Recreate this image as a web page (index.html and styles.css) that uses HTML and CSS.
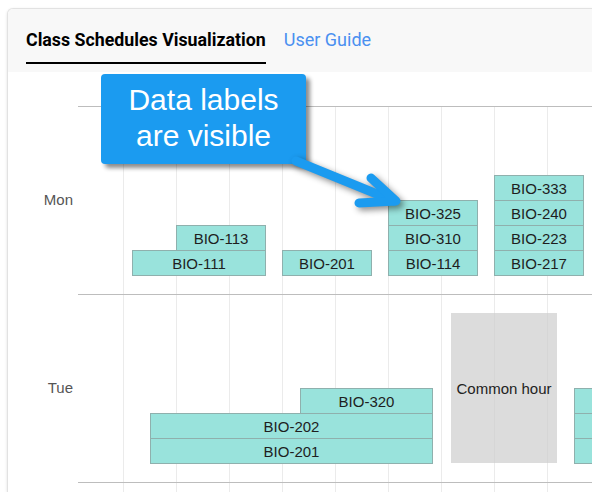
FILE: index.html
```html
<!DOCTYPE html>
<html lang="en">
<head>
<meta charset="utf-8">
<title>Class Schedules Visualization</title>
<link rel="stylesheet" href="styles.css">
</head>
<body>
<div class="card">
  <div class="tabs">
    <div class="tab active">Class Schedules Visualization</div>
    <div class="tab link">User Guide</div>
  </div>
  <div class="chart">
    <div class="row">
      <div class="day">Mon</div>
      <div class="track">
        <div class="bar" style="left:54px;top:143px;width:134px">BIO-111</div>
        <div class="bar" style="left:98px;top:118px;width:90px">BIO-113</div>
        <div class="bar" style="left:204px;top:143px;width:90px">BIO-201</div>
        <div class="bar" style="left:310px;top:143px;width:90px">BIO-114</div>
        <div class="bar" style="left:310px;top:118px;width:90px">BIO-310</div>
        <div class="bar" style="left:310px;top:93px;width:90px">BIO-325</div>
        <div class="bar" style="left:416px;top:143px;width:90px">BIO-217</div>
        <div class="bar" style="left:416px;top:118px;width:90px">BIO-223</div>
        <div class="bar" style="left:416px;top:93px;width:90px">BIO-240</div>
        <div class="bar" style="left:416px;top:68px;width:90px">BIO-333</div>
      </div>
    </div>
    <div class="row">
      <div class="day">Tue</div>
      <div class="track">
        <div class="bar" style="left:72px;top:143px;width:283px">BIO-201</div>
        <div class="bar" style="left:72px;top:118px;width:283px">BIO-202</div>
        <div class="bar" style="left:222px;top:93px;width:133px">BIO-320</div>
        <div class="block" style="left:373px;top:18px;width:106px;height:150px">Common hour</div>
        <div class="bar" style="left:496px;top:143px;width:133px"></div>
        <div class="bar" style="left:496px;top:118px;width:133px"></div>
        <div class="bar" style="left:496px;top:93px;width:133px"></div>
      </div>
    </div>
    <div class="row last">
      <div class="day"></div>
      <div class="track"></div>
    </div>
  </div>
  <div class="callout">Data labels<br>are visible</div>
  <svg class="pointer" width="592" height="492" viewBox="0 0 592 492" aria-hidden="true">
    <g fill="none" stroke="#1b9bf0" stroke-width="9" stroke-linecap="round" stroke-linejoin="round">
      <path d="M296 161 L394 201"/>
      <path d="M371 178 L396 201 L359 203"/>
    </g>
  </svg>
</div>
</body>
</html>
```

FILE: styles.css
```css
html, body {
  margin: 0;
  padding: 0;
  background: #ffffff;
  overflow: hidden;
}

body {
  width: 592px;
  height: 492px;
}

.card {
  position: relative;
  margin: 8px 0 0 7px;
  width: 585px;
  height: 483px;
  overflow: hidden;
  border: 1px solid #e2e2e2;
  border-right: 0;
  border-bottom: 0;
  border-radius: 6px 0 0 0;
  box-shadow: 0 1px 3px rgba(0, 0, 0, 0.12);
  background: #ffffff;
}

.tabs {
  display: flex;
  align-items: flex-end;
  gap: 18px;
  padding: 20px 0 8px 18px;
  background: #f8f8f8;
  font-family: Roboto, "Liberation Sans", sans-serif;
  font-size: 18px;
  line-height: 22px;
}

.tab {
  padding-bottom: 11px;
  border-bottom: 2px solid transparent;
  white-space: nowrap;
}

.tab.active {
  font-weight: 700;
  font-size: 17.8px;
  color: #000000;
  border-bottom-color: #000000;
}

.tab.link {
  color: #4a90f0;
}

.chart {
  margin-top: 34px;
  font-family: "Liberation Sans", Arial, sans-serif;
  font-size: 15px;
}

.row {
  display: flex;
  height: 188px;
}

.row.last {
  height: 10px;
}

.day {
  width: 70px;
  box-sizing: border-box;
  padding-right: 5px;
  text-align: right;
  color: #555555;
  align-self: center;
  line-height: 18px;
}

.track {
  position: relative;
  flex: 1;
  border-top: 1px solid #bdbdbd;
  background-image: linear-gradient(to right, #ebebeb 1px, transparent 1px);
  background-size: 53px 100%;
  background-position: 45px 0;
}

.bar {
  position: absolute;
  height: 26px;
  box-sizing: border-box;
  border: 1px solid #8fb0ad;
  background: #99e3dc;
  color: #1e1e1e;
  text-align: center;
  line-height: 25px;
  white-space: nowrap;
  overflow: hidden;
}

.block {
  position: absolute;
  display: flex;
  align-items: center;
  justify-content: center;
  background: rgba(205, 205, 205, 0.7);
  color: #222222;
  white-space: nowrap;
}

.callout {
  position: absolute;
  left: 93px;
  top: 65px;
  width: 205px;
  height: 90px;
  box-sizing: border-box;
  padding-top: 8px;
  border-radius: 4px;
  background: #1b9bf0;
  color: #ffffff;
  text-align: center;
  font-family: "Liberation Sans", Arial, sans-serif;
  font-size: 30px;
  line-height: 36px;
  box-shadow: 4px 4px 4px rgba(0, 0, 0, 0.45);
  z-index: 2;
}

.pointer {
  position: absolute;
  left: -8px;
  top: -9px;
  z-index: 3;
  filter: drop-shadow(3px 3px 3px rgba(0, 0, 0, 0.45));
}
```
